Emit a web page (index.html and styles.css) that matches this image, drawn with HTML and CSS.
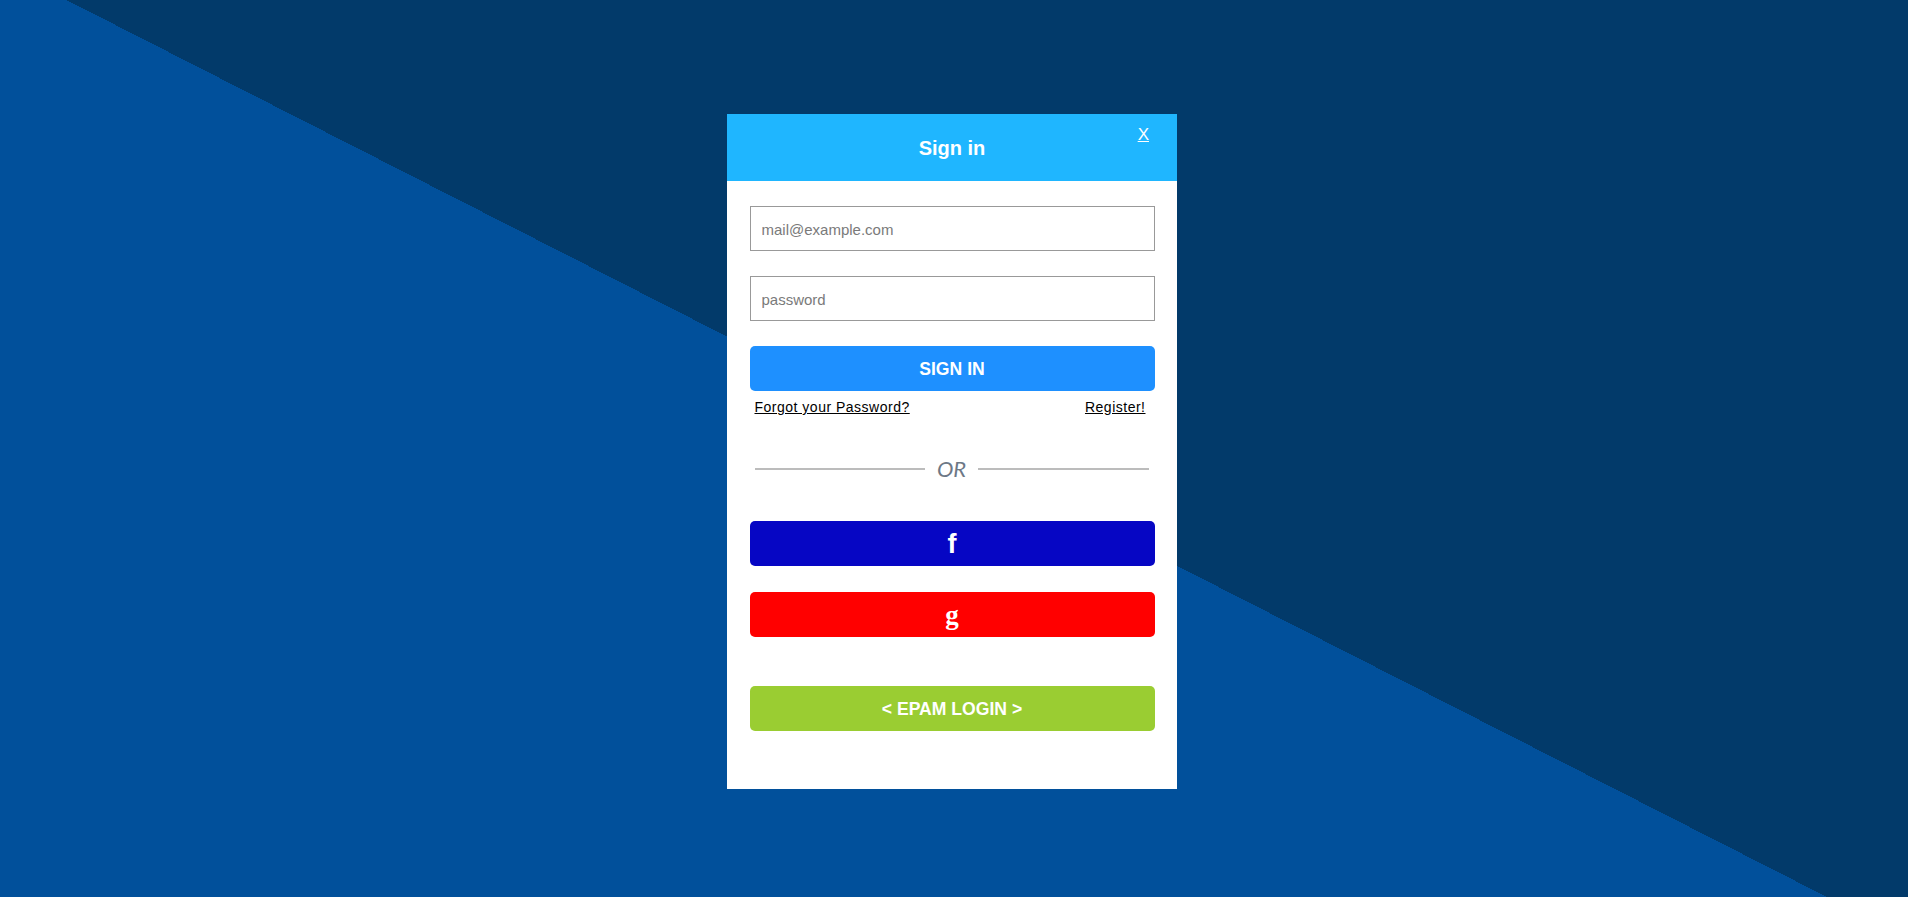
FILE: index.html
```html
<!DOCTYPE html>
<html lang="en">
<head>
<meta charset="utf-8">
<title>Sign in</title>
<link rel="stylesheet" href="styles.css">
</head>
<body>
<div class="page">
  <div class="modal">
    <div class="modal-header">
      <h1 class="title">Sign in</h1>
      <a class="close" href="#">X</a>
    </div>
    <form class="form">
      <input class="field" type="text" placeholder="mail@example.com">
      <input class="field" type="password" placeholder="password">
      <button class="btn btn-signin" type="button">SIGN IN</button>
      <div class="links">
        <a href="#" class="link">Forgot your Password?</a>
        <a href="#" class="link">Register!</a>
      </div>
      <div class="divider">
        <span class="line"></span>
        <span class="or">OR</span>
        <span class="line"></span>
      </div>
      <button class="btn btn-fb" type="button">f</button>
      <button class="btn btn-g" type="button">g</button>
      <button class="btn btn-epam" type="button">&lt; EPAM LOGIN &gt;</button>
    </form>
  </div>
</div>
</body>
</html>
```
FILE: styles.css
```css
html, body {
  margin: 0;
  padding: 0;
  height: 100%;
}

body {
  background: linear-gradient(27deg, #01509b 49.8%, #023a6a 49.8%);
  font-family: "Liberation Sans", Arial, sans-serif;
  overflow: hidden;
}

.page {
  padding-top: 114px;
}

.modal {
  position: relative;
  width: 450px;
  height: 675px;
  margin-left: calc(50% - 227px);
  background: #ffffff;
}

.modal-header {
  height: 67px;
  background: #1fb6ff;
  display: flex;
  align-items: center;
  justify-content: center;
  padding-top: 1px;
  box-sizing: border-box;
}

.title {
  margin: 0;
  color: #ffffff;
  font-size: 20px;
  font-weight: bold;
}

.close {
  position: absolute;
  top: 11px;
  right: 28px;
  color: #ffffff;
  font-size: 17px;
  text-decoration: underline;
}

.form {
  width: 405px;
  margin: 0 auto;
  padding-top: 25px;
  display: flex;
  flex-direction: column;
}

.field {
  display: block;
  box-sizing: border-box;
  width: 100%;
  height: 45px;
  margin: 0 0 25px 0;
  padding: 1px 11px 0;
  border: 1px solid #999999;
  font-family: "Liberation Sans", Arial, sans-serif;
  font-size: 15px;
  color: #333;
  outline: none;
}

.field::placeholder {
  color: #7a7a7a;
}

.btn {
  display: block;
  width: 100%;
  height: 45px;
  border: none;
  border-radius: 5px;
  color: #ffffff;
  padding: 1px 0 0;
  cursor: pointer;
}

.btn-signin {
  background: #1e90ff;
  font-family: "Liberation Sans", Arial, sans-serif;
  font-weight: bold;
  font-size: 17.6px;
}

.links {
  margin-top: 8px;
  display: flex;
  justify-content: space-between;
  padding: 0 9px 0 5px;
  line-height: 17px;
}

.link {
  color: #000000;
  font-family: "Liberation Sans", Arial, sans-serif;
  font-size: 14px;
  letter-spacing: 0.5px;
  text-decoration: underline;
}

.divider {
  margin-top: 40px;
  height: 26px;
  display: flex;
  align-items: center;
  padding: 0 6px 0 5px;
}

.line {
  flex: 1;
  height: 2px;
  background: #bcbcbc;
}

.or {
  margin: 0 12px;
  font-family: Lato, "Open Sans", sans-serif;
  font-style: italic;
  font-size: 22px;
  line-height: 26px;
  color: #6d7886;
}

.btn-fb {
  margin-top: 39px;
  background: #0606c4;
  font-family: "Liberation Sans", Arial, sans-serif;
  font-weight: bold;
  font-size: 27px;
}

.btn-g {
  margin-top: 26px;
  background: #ff0000;
  font-family: "Liberation Serif", "Times New Roman", serif;
  font-weight: bold;
  font-size: 27px;
}

.btn-epam {
  margin-top: 49px;
  background: #9acd32;
  font-family: "Liberation Sans", Arial, sans-serif;
  font-weight: bold;
  font-size: 17.6px;
}
```
